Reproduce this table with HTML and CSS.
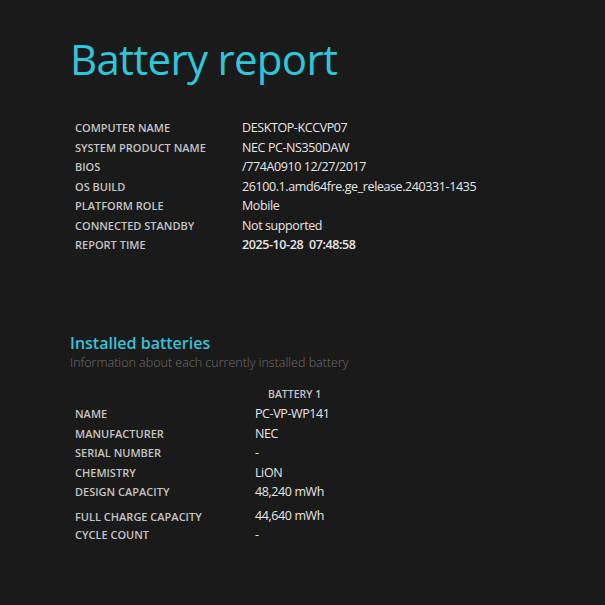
FILE: index.html
```html
<!DOCTYPE html>
<html>
<head>
<meta charset="utf-8">
<link rel="stylesheet" href="styles.css">
</head>
<body>
<div class="page">
  <h1 class="title">Battery report</h1>
  <table class="info">
    <tr><td class="label">COMPUTER NAME</td><td class="value">DESKTOP-KCCVP07</td></tr>
    <tr><td class="label">SYSTEM PRODUCT NAME</td><td class="value">NEC PC-NS350DAW</td></tr>
    <tr><td class="label">BIOS</td><td class="value">/774A0910 12/27/2017</td></tr>
    <tr><td class="label">OS BUILD</td><td class="value">26100.1.amd64fre.ge_release.240331-1435</td></tr>
    <tr><td class="label">PLATFORM ROLE</td><td class="value">Mobile</td></tr>
    <tr><td class="label">CONNECTED STANDBY</td><td class="value">Not supported</td></tr>
    <tr><td class="label">REPORT TIME</td><td class="value bold">2025-10-28&nbsp;&nbsp;07:48:58</td></tr>
  </table>

  <h2 class="section">Installed batteries</h2>
  <div class="sub">Information about each currently installed battery</div>
  <table class="batt">
    <tr><td class="label"></td><td class="head">BATTERY 1</td></tr>
    <tr><td class="label">NAME</td><td class="value">PC-VP-WP141</td></tr>
    <tr><td class="label">MANUFACTURER</td><td class="value">NEC</td></tr>
    <tr><td class="label">SERIAL NUMBER</td><td class="value">-</td></tr>
    <tr><td class="label">CHEMISTRY</td><td class="value">LiON</td></tr>
    <tr><td class="label">DESIGN CAPACITY</td><td class="value">48,240 mWh</td></tr>
    <tr class="gap"><td class="label">FULL CHARGE CAPACITY</td><td class="value">44,640 mWh</td></tr>
    <tr><td class="label">CYCLE COUNT</td><td class="value">-</td></tr>
  </table>
</div>
</body>
</html>
```

FILE: styles.css
```css
html, body {
  margin: 0;
  padding: 0;
  background: #1b1a1a;
}
body {
  font-family: "Open Sans", "Noto Sans", sans-serif;
  color: #e4e4e4;
}
.page {
  padding: 29px 0 0 70px;
}
.title {
  margin: 0;
  font-size: 42px;
  font-weight: 400;
  line-height: 60px;
  color: #30c6da;
  letter-spacing: -0.7px;
}
.info, .batt {
  border-collapse: collapse;
}
.info {
  margin-top: 29px;
}
td {
  padding: 0 0 0 5px;
  height: 19.5px;
  vertical-align: middle;
  white-space: nowrap;
}
.label {
  width: 162px;
  font-size: 11px;
  font-weight: 600;
  color: #c4c4c4;
}
.value {
  font-size: 12.5px;
  letter-spacing: -0.4px;
  color: #e6e6e6;
}
.bold { font-weight: 600; }
.section {
  margin: 78px 0 0 0;
  font-size: 16px;
  font-weight: 600;
  line-height: 20px;
  color: #35c3d6;
}
.sub {
  margin-top: 2px;
  font-size: 12.5px;
  font-weight: 300;
  color: #6e6e6e;
  line-height: 16px;
}
.batt {
  margin-top: 14px;
}
.batt .label { width: 175px; }
.head {
  font-size: 10.5px;
  font-weight: 600;
  color: #c4c4c4;
  padding-left: 18px;
}
.batt tr.gap td { height: 22px; vertical-align: bottom; padding-bottom: 1px; }
```
